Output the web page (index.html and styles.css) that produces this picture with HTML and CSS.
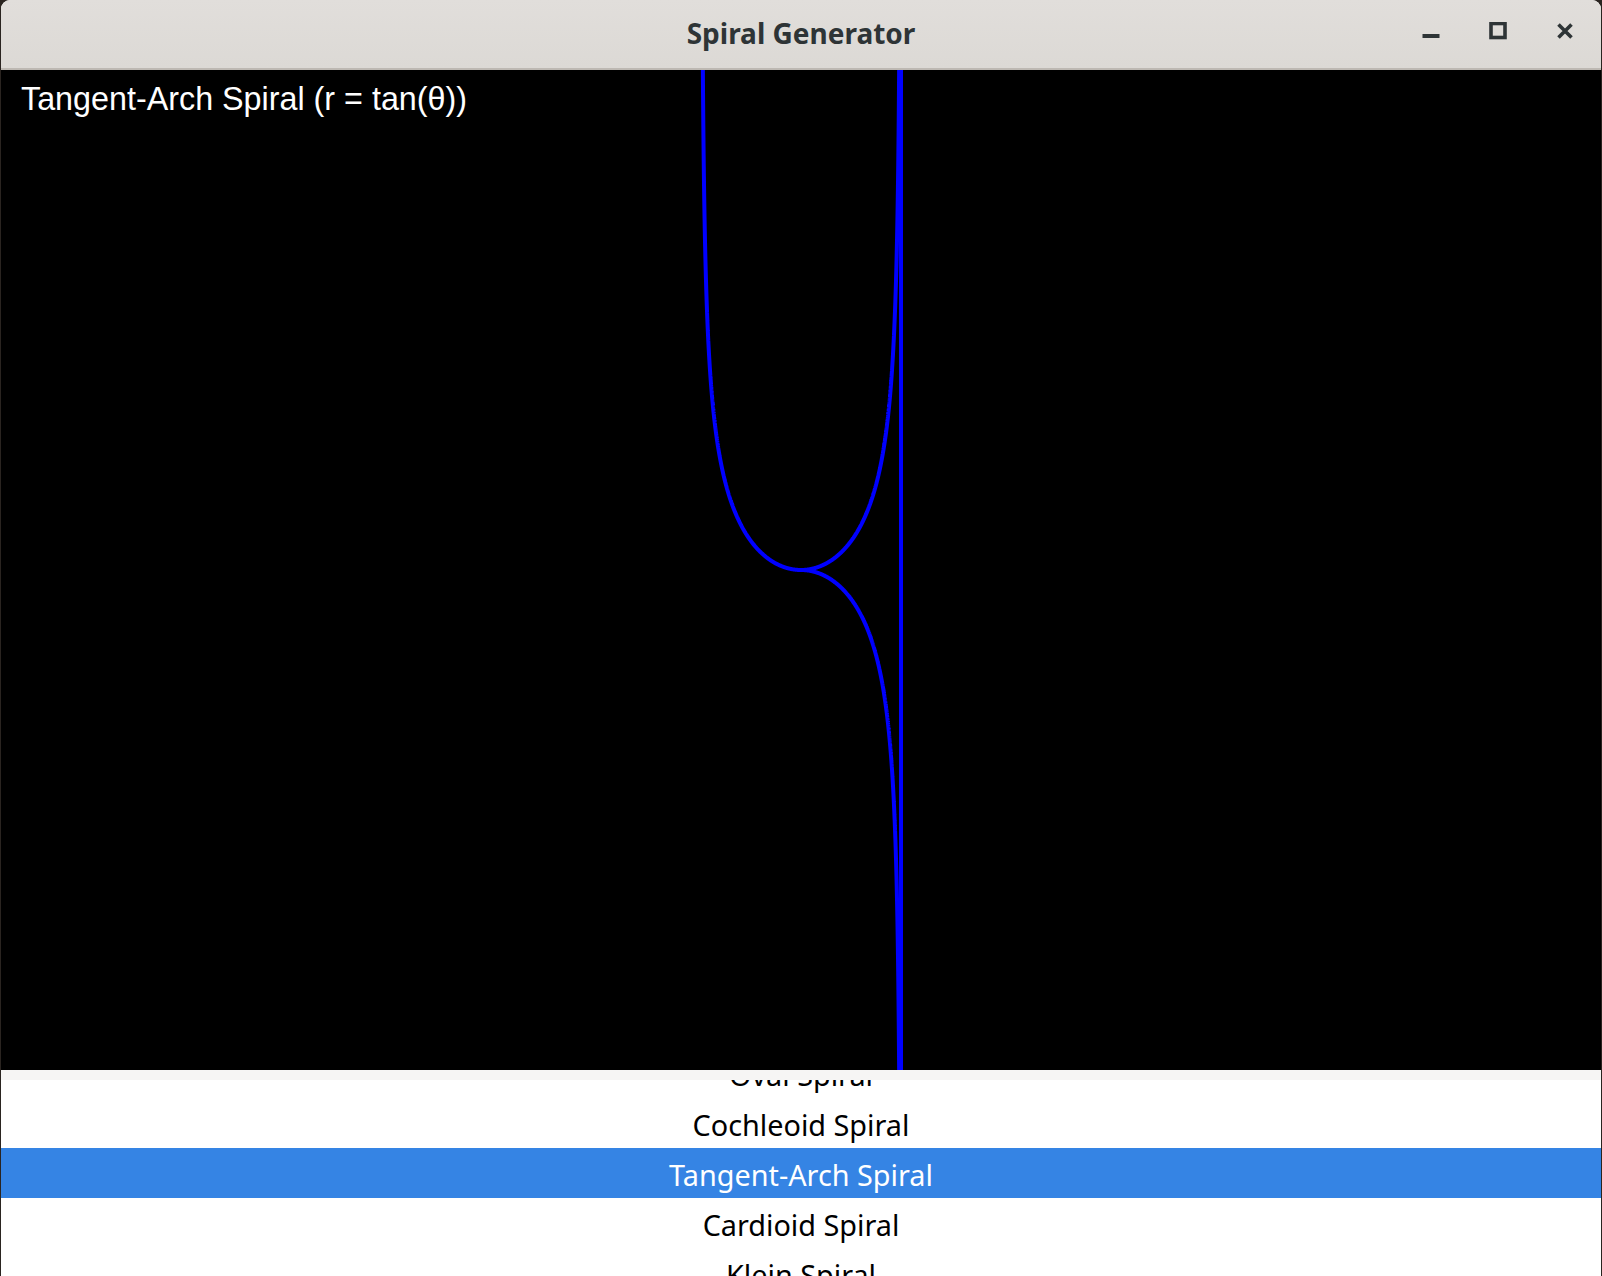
FILE: index.html
```html
<!DOCTYPE html>
<html>
<head>
<meta charset="utf-8">
<title>Spiral Generator</title>
<link rel="stylesheet" href="styles.css">
</head>
<body>
<div class="window">
  <header class="titlebar">
    <div class="title">Spiral Generator</div>
    <div class="controls">
      <span class="ctl ctl-min"><svg width="18" height="18" viewBox="0 0 18 18"><rect x="0.5" y="12" width="17" height="4" fill="#2e3436"/></svg></span>
      <span class="ctl ctl-max"><svg width="18" height="18" viewBox="0 0 18 18"><rect x="2" y="1.5" width="14" height="14" fill="none" stroke="#2e3436" stroke-width="3.6"/></svg></span>
      <span class="ctl ctl-close"><svg width="18" height="18" viewBox="0 0 18 18"><path d="M2.5 2.5 L15.5 15.5 M15.5 2.5 L2.5 15.5" stroke="#2e3436" stroke-width="3.6" stroke-linecap="butt"/></svg></span>
    </div>
  </header>
  <main class="canvas">
    <svg class="plot" viewBox="0 0 1600 1000" width="1600" height="1000">
      <path id="curve" d="" fill="none" stroke="#0000ff" stroke-width="4" stroke-linejoin="round"/>
    </svg>
    <div class="label">Tangent-Arch Spiral (r = tan(θ))</div>
  </main>
  <section class="listpane">
    <div class="shade"></div>
    <ul class="list">
      <li class="item">Oval Spiral</li>
      <li class="item">Cochleoid Spiral</li>
      <li class="item selected">Tangent-Arch Spiral</li>
      <li class="item">Cardioid Spiral</li>
      <li class="item">Klein Spiral</li>
    </ul>
  </section>
</div>
<script src="script.js"></script>
</body>
</html>
```
FILE: styles.css
```css
html, body {
  margin: 0;
  padding: 0;
  height: 100%;
  overflow: hidden;
}
body {
  background: #2a2420;
  padding: 0 1px;
  box-sizing: border-box;
}
.window {
  width: 1600px;
  height: 1276px;
  display: flex;
  flex-direction: column;
  overflow: hidden;
  border-radius: 9px 9px 0 0;
  background: #ffffff;
}
.titlebar {
  flex: 0 0 auto;
  height: 68px;
  border-bottom: 2px solid #bdb8b2;
  background: linear-gradient(#e1dedb, #dcd9d5);
  position: relative;
  display: flex;
  align-items: center;
  justify-content: center;
}
.title {
  font-family: "Noto Sans", "Open Sans", sans-serif;
  font-weight: 700;
  font-size: 28px;
  color: #2e3436;
  margin-top: -2px;
}
.controls {
  position: absolute;
  right: 27px;
  top: 22px;
  display: flex;
  gap: 49px;
}
.ctl {
  display: block;
  width: 18px;
  height: 18px;
}
.ctl svg { display: block; }
.canvas {
  flex: 0 0 auto;
  height: 1000px;
  background: #000000;
  position: relative;
  overflow: hidden;
}
.plot {
  display: block;
}
.label {
  position: absolute;
  left: 20px;
  top: 13px;
  font-family: "Liberation Sans", Arial, sans-serif;
  font-size: 32.3px;
  line-height: 32px;
  color: #ffffff;
  white-space: nowrap;
}
.listpane {
  flex: 1 1 auto;
  position: relative;
  overflow: hidden;
  background: #ffffff;
}
.shade {
  position: absolute;
  left: 0;
  right: 0;
  top: 0;
  height: 10px;
  background: #f6f5f4;
  z-index: 2;
}
.list {
  list-style: none;
  margin: -22px 0 0 0;
  padding: 0;
}
.item {
  height: 50px;
  box-sizing: border-box;
  padding-top: 4px;
  line-height: 46px;
  text-align: center;
  font-family: "Noto Sans", "Open Sans", sans-serif;
  font-size: 28.8px;
  color: #000000;
}
.item.selected {
  background: #3584e4;
  color: #ffffff;
}
```
FILE: script.js
```js
(function () {
  var cx = 800, cy = 500, s = 100;
  var pts = [];
  var start = -Math.PI / 2 + 0.0005, end = Math.PI;
  var step = 0.0005;
  for (var t = start; t <= end + 1e-9; t += step) {
    var r = Math.tan(t);
    var x = cx + s * r * Math.cos(t);
    var y = cy - s * r * Math.sin(t);
    if (y < -3000) y = -3000;
    if (y > 4000) y = 4000;
    pts.push(x.toFixed(2) + ' ' + y.toFixed(2));
  }
  document.getElementById('curve').setAttribute('d', 'M' + pts.join(' L'));
})();
```
